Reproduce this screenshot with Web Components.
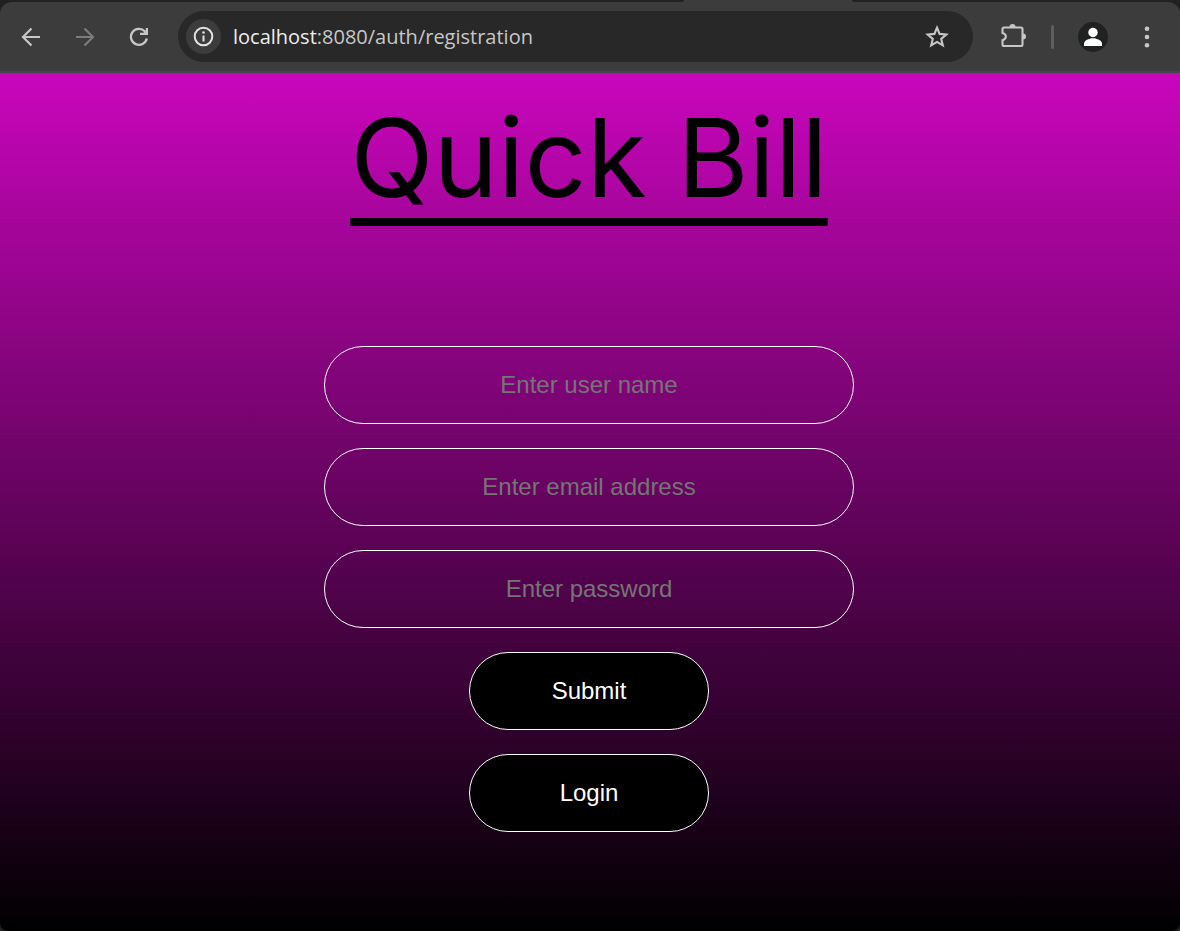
<!DOCTYPE html>
<html lang="en">
<head>
<meta charset="utf-8">
<title>Quick Bill</title>
<style>
  html { background: #202121; }
  body { margin: 0; min-height: 100vh; display: flex; flex-direction: column; font-family: "Liberation Sans", Arial, sans-serif; }
  registration-page { flex: 1; }
</style>
</head>
<body>
<browser-toolbar><span slot="host">localhost</span><span slot="path">:8080/auth/registration</span></browser-toolbar>
<registration-page>
  <brand-title>Quick Bill</brand-title>
  <registration-form>
    <pill-field label="Enter user name" type="text" name="username"></pill-field>
    <pill-field label="Enter email address" type="email" name="email"></pill-field>
    <pill-field label="Enter password" type="password" name="password"></pill-field>
    <pill-button>Submit</pill-button>
    <pill-button>Login</pill-button>
  </registration-form>
</registration-page>

<template id="toolbar-template">
  <style>
    :host { display: block; background: #202121; }
    .strip { display: grid; grid-template-columns: 683fr 170fr 327fr; height: 2px; }
    .tab { grid-column: 2; background: #3c3c3c; border-radius: 2px 2px 0 0; }
    nav { display: flex; align-items: center; height: 69px; padding: 0 6px 0 4px; background: #3c3c3c; border-bottom: 2px solid #474747; border-radius: 12px 12px 0 0; }
    button { display: grid; place-items: center; width: 54px; height: 48px; flex: none; padding: 0; border: 0; background: none; color: #c7c7c7; }
    button:disabled { color: #7b7b7b; }
    svg { display: block; }
    .address { flex: 1; min-width: 0; display: flex; align-items: center; height: 51px; margin: 0 13px 0 12px; padding-left: 8px; box-sizing: border-box; background: #282828; border-radius: 26px; }
    .address .info { width: 35px; height: 35px; border-radius: 50%; background: #3c3c3c; color: #e3e3e3; }
    .address .star { margin-right: 9px; }
    .url { flex: 1; min-width: 0; margin-left: 12px; overflow: hidden; white-space: nowrap; font: 20px/28px "Open Sans", "Noto Sans", sans-serif; color: #c7c7c7; }
    .host { color: #ededed; }
    .divider { width: 3px; height: 24px; margin: 0 12px 0 11px; border-radius: 2px; background: #5e5e5e; }
  </style>
  <div class="strip"><div class="tab"></div></div>
  <nav aria-label="Browser">
    <button aria-label="Back"><svg width="24" height="24" viewBox="0 0 24 24" fill="none" stroke="currentColor" stroke-width="2.2"><path d="M21 12H4M12.500 3.500L4 12l8.500 8.500"/></svg></button>
    <button aria-label="Forward" disabled><svg width="24" height="24" viewBox="0 0 24 24" fill="none" stroke="currentColor" stroke-width="2.2"><path d="M3 12h17M11.500 3.500L20 12l-8.500 8.500"/></svg></button>
    <button aria-label="Reload"><svg width="24" height="24" viewBox="0 0 24 24" fill="none" stroke="currentColor" stroke-width="2.3"><path d="M19.800 13.500A8 8 0 1 1 17.800 6.300L20 8.500"/><path d="M21 3v7h-8v-2.200h3.500l2.300-2.300V3z" fill="currentColor" stroke="none"/></svg></button>
    <div class="address">
      <button class="info" aria-label="Site information"><svg width="21" height="21" viewBox="0 0 21 21"><circle cx="10.500" cy="10.500" r="8.800" fill="none" stroke="currentColor" stroke-width="2"/><path d="M9.500 9.500h2v6h-2z" fill="currentColor"/><circle cx="10.500" cy="6.500" r="1.300" fill="currentColor"/></svg></button>
      <div class="url"><span class="host"><slot name="host"></slot></span><slot name="path"></slot></div>
      <button class="star" aria-label="Bookmark"><svg width="26" height="26" viewBox="0 0 26 26" fill="none" stroke="currentColor" stroke-width="2.1"><path d="M13 3.700l2.600 6.200 6.700.6-5.100 4.400 1.600 6.500-5.800-3.500-5.800 3.500 1.600-6.500-5.100-4.400 6.700-.6z"/></svg></button>
    </div>
    <button aria-label="Extensions"><svg width="28" height="28" viewBox="0 0 28 28"><path d="M5 4.500h17a1.500 1.500 0 0 1 1.500 1.500v15.500a1.500 1.500 0 0 1-1.500 1.500H5a1.500 1.500 0 0 1-1.500-1.500v-4.200c4.500-1.500 4.500-6 0-7.300V6A1.500 1.500 0 0 1 5 4.500z" fill="none" stroke="currentColor" stroke-width="2.1"/><path d="M10.500 4a3 3 0 0 1 6 0zM24 10.500a3 3 0 0 1 0 6z" fill="currentColor"/></svg></button>
    <span class="divider"></span>
    <button aria-label="Profile"><svg width="30" height="30" viewBox="0 0 30 30"><circle cx="15" cy="15" r="15" fill="#202121"/><circle cx="15" cy="10.500" r="4.700" fill="#fff"/><path d="M6 24v-2.500c0-3 5-5.300 9-5.300s9 2.300 9 5.300V24z" fill="#fff"/></svg></button>
    <button aria-label="Menu"><svg width="24" height="24" viewBox="0 0 24 24" fill="currentColor"><circle cx="12" cy="3.700" r="2.300"/><circle cx="12" cy="12" r="2.300"/><circle cx="12" cy="20.300" r="2.300"/></svg></button>
  </nav>
</template>

<template id="page-template">
  <style>
    :host { display: flex; background: #202121; }
    main { flex: 1; min-width: 0; display: flex; flex-direction: column; align-items: center; gap: 112px; box-sizing: border-box; padding: 8px 2px 24px 0; background: linear-gradient(#c906bc, #000); border-radius: 0 0 8px 8px; }
  </style>
  <main><slot></slot></main>
</template>

<template id="title-template">
  <style>
    :host { display: block; }
    h1 { margin: 0; font: 400 109px/153px Inter, sans-serif; color: #000; text-decoration: underline 8px; text-underline-offset: 21px; text-decoration-skip-ink: none; white-space: nowrap; }
  </style>
  <h1><slot></slot></h1>
</template>

<template id="form-template">
  <style>
    :host { display: block; width: 100%; max-width: 530px; }
    form { display: flex; flex-direction: column; align-items: center; gap: 24px; }
  </style>
  <form><slot></slot></form>
</template>

<template id="field-template">
  <style>
    :host { display: block; width: 100%; }
    input { display: block; width: 100%; height: 78px; box-sizing: border-box; margin: 0; padding: 0 24px; border: 1px solid #fff; border-radius: 39px; background: none; color: #fff; font: 24px/28px "Liberation Sans", Arial, sans-serif; text-align: center; outline: none; }
    input::placeholder { color: #757575; opacity: 1; }
  </style>
  <input>
</template>

<template id="button-template">
  <style>
    :host { display: block; width: 240px; }
    button { display: block; width: 100%; height: 78px; margin: 0; padding: 0; border: 1px solid #fff; border-radius: 39px; background: #000; color: #fff; font: 24px/28px "Liberation Sans", Arial, sans-serif; }
  </style>
  <button type="button"><slot></slot></button>
</template>

<script>
  class TemplateElement extends HTMLElement {
    constructor() {
      super();
      const template = document.getElementById(this.constructor.template);
      this.attachShadow({ mode: "open" }).append(template.content.cloneNode(true));
    }
  }
  class BrowserToolbar extends TemplateElement { static template = "toolbar-template"; }
  class RegistrationPage extends TemplateElement { static template = "page-template"; }
  class BrandTitle extends TemplateElement { static template = "title-template"; }
  class RegistrationForm extends TemplateElement { static template = "form-template"; }
  class PillButton extends TemplateElement { static template = "button-template"; }
  class PillField extends TemplateElement {
    static template = "field-template";
    connectedCallback() {
      const input = this.shadowRoot.querySelector("input");
      input.type = this.getAttribute("type");
      input.name = this.getAttribute("name");
      input.placeholder = this.getAttribute("label");
      input.setAttribute("aria-label", this.getAttribute("label"));
    }
  }
  customElements.define("browser-toolbar", BrowserToolbar);
  customElements.define("registration-page", RegistrationPage);
  customElements.define("brand-title", BrandTitle);
  customElements.define("registration-form", RegistrationForm);
  customElements.define("pill-field", PillField);
  customElements.define("pill-button", PillButton);
</script>
</body>
</html>
